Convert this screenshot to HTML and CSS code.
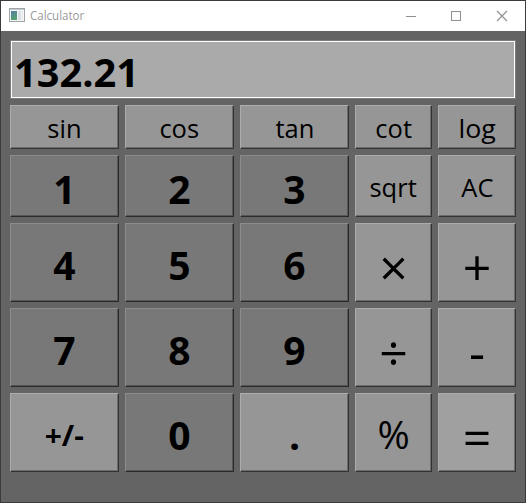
FILE: index.html
```html
<!DOCTYPE html>
<html lang="en">
<head>
<meta charset="utf-8">
<title>Calculator</title>
<link rel="stylesheet" href="styles.css">
</head>
<body>
<main class="window">
  <header class="titlebar">
    <svg class="app-icon" width="16" height="14" viewBox="0 0 16 14">
      <defs>
        <linearGradient id="pane" x1="0" y1="0" x2="0.4" y2="1">
          <stop offset="0" stop-color="#5580a8"/>
          <stop offset="1" stop-color="#55a070"/>
        </linearGradient>
      </defs>
      <rect x="0.5" y="0.5" width="15" height="13" fill="#f4f6f7" stroke="#a0a5a8"/>
      <rect x="1" y="1" width="14" height="1" fill="#c4cace"/>
      <rect x="2" y="3" width="6" height="9" fill="url(#pane)"/>
      <rect x="9" y="3" width="3" height="9" fill="#d8e0e2"/>
      <rect x="13" y="3" width="1" height="9" fill="#e6e9ea"/>
    </svg>
    <h1 class="title">Calculator</h1>
    <svg class="controls" width="106" height="12" viewBox="0 0 106 12" fill="none" stroke="#909090" shape-rendering="crispEdges">
      <path d="M0 6.5H10"/>
      <rect x="45.5" y="1.5" width="9" height="9"/>
      <path d="M91 1L101 11M101 1L91 11" shape-rendering="auto" stroke-width="1.2"/>
    </svg>
  </header>
  <output class="display"><span>132.21</span></output>
  <section class="keys">
    <button class="key fn"><span>sin</span></button>
    <button class="key fn"><span>cos</span></button>
    <button class="key fn"><span>tan</span></button>
    <button class="key fn"><span>cot</span></button>
    <button class="key fn"><span class="wide">log</span></button>

    <button class="key digit low">1</button>
    <button class="key digit low">2</button>
    <button class="key digit low">3</button>
    <button class="key fn"><span>sqrt</span></button>
    <button class="key fn"><span>AC</span></button>

    <button class="key digit">4</button>
    <button class="key digit">5</button>
    <button class="key digit">6</button>
    <button class="key op">×</button>
    <button class="key op">+</button>

    <button class="key digit">7</button>
    <button class="key digit">8</button>
    <button class="key digit">9</button>
    <button class="key op">÷</button>
    <button class="key op">-</button>

    <button class="key sign"><span>+/-</span></button>
    <button class="key digit">0</button>
    <button class="key point">.</button>
    <button class="key percent"><span>%</span></button>
    <button class="key op equals">=</button>
  </section>
</main>
</body>
</html>
```
FILE: styles.css
```css
* {
  box-sizing: border-box;
}

body {
  margin: 0;
  background: #3c3a3c;
  font-family: "Open Sans", "Noto Sans", sans-serif;
}

.window {
  width: 526px;
  height: 503px;
  border: 1px solid #3c3a3c;
  background: #646464;
  overflow: hidden;
}

.titlebar {
  display: flex;
  align-items: center;
  height: 30px;
  padding: 0 13px 0 8px;
  background: #fff;
}

.app-icon {
  margin-top: -2px;
}

.title {
  margin: 0 auto 0 5px;
  font-size: 12px;
  font-weight: 400;
  line-height: 16px;
  color: #999;
  transform: scaleX(0.96);
  transform-origin: left;
}

.controls {
  margin-top: -1px;
}

.display {
  display: flex;
  align-items: center;
  height: 59px;
  margin: 9px 9px 6px;
  padding: 4px 0 0 3px;
  border: 1px solid #7c7c7c;
  outline: 1px solid #fff;
  outline-offset: -2px;
  background: #aaa;
  font-size: 39px;
  font-weight: 700;
  line-height: 1;
}

.display span {
  transform: scaleX(1.02);
  transform-origin: left;
}

.keys {
  display: grid;
  grid-template-columns: 109px 109px 109px 77px 78px;
  grid-template-rows: 44px 62px 79px 79px 79px;
  gap: 6px;
  margin: 0 9px;
}

.key {
  display: flex;
  align-items: center;
  justify-content: center;
  min-width: 0;
  padding: 3px 0 0;
  border: 1px solid;
  border-color: #acacac #333 #333 #acacac;
  box-shadow: inset -1px -1px #6c6c6c;
  background: #969696;
  color: #000;
  font-family: inherit;
  line-height: 1;
}

.fn {
  padding-top: 1px;
  font-size: 26px;
}

.fn span {
  transform: scaleX(0.98);
}

.fn .wide {
  transform: scaleX(1.03);
}

.digit,
.point {
  font-size: 39px;
  font-weight: 700;
}

.digit {
  border-color: #8c8c8c #2a2a2a #2a2a2a #8c8c8c;
  box-shadow: inset -1px -1px #565656;
  background: #787878;
}

.low {
  padding-top: 5px;
}

.op {
  padding-top: 9px;
  font-size: 50px;
}

.sign {
  padding-top: 4px;
  font-size: 28px;
  font-weight: 700;
}

.sign span {
  transform: scaleX(1.07);
}

.percent {
  padding-top: 2px;
  font-size: 39px;
}

.equals {
  background: #a0a0a0;
}
```
